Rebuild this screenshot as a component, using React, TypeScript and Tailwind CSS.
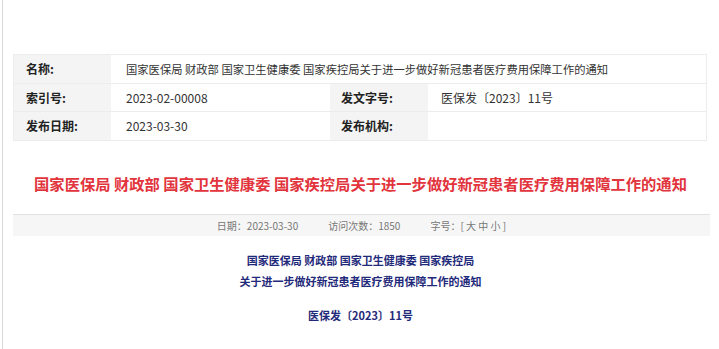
import React from "react";

const font = { fontFamily: '"Microsoft YaHei", "Noto Sans CJK SC", "Noto Sans", sans-serif' };

export default function App() {
  return (
    <div className="w-[719px] h-[349px] bg-white overflow-hidden" style={font}>
      <div className="ml-[2px] h-full border-l border-[#d9d9d9] pl-[10px] pr-[11px] pt-[54px]">
        <div className="w-[694px] border border-[#ececec] text-[12px] text-[#333]">
          <div className="flex h-[29px] border-b border-[#ececec]">
            <div className="w-[97px] bg-[#f4f4f4] pl-[12px] flex items-center font-bold text-[#222]">名称:</div>
            <div className="flex-1 pl-[15px] flex items-center text-[11.3px]">国家医保局 财政部 国家卫生健康委 国家疾控局关于进一步做好新冠患者医疗费用保障工作的通知</div>
          </div>
          <div className="flex h-[28px] border-b border-[#ececec]">
            <div className="w-[97px] bg-[#f4f4f4] pl-[12px] flex items-center font-bold text-[#222]">索引号:</div>
            <div className="w-[219px] pl-[15px] flex items-center">2023-02-00008</div>
            <div className="w-[98px] bg-[#f4f4f4] pl-[11px] flex items-center font-bold text-[#222]">发文字号:</div>
            <div className="flex-1 pl-[13px] flex items-center">医保发〔2023〕11号</div>
          </div>
          <div className="flex h-[28px]">
            <div className="w-[97px] bg-[#f4f4f4] pl-[12px] flex items-center font-bold text-[#222]">发布日期:</div>
            <div className="w-[219px] pl-[15px] flex items-center">2023-03-30</div>
            <div className="w-[98px] bg-[#f4f4f4] pl-[11px] flex items-center font-bold text-[#222]">发布机构:</div>
            <div className="flex-1"></div>
          </div>
        </div>

        <div className="mt-[30px] text-center text-[15.3px] font-bold text-[#e2343c] leading-[24px]">
          国家医保局 财政部 国家卫生健康委 国家疾控局关于进一步做好新冠患者医疗费用保障工作的通知
        </div>

        <div className="mt-[19px] w-[697px] h-[22px] bg-[#f6f6f6] border-t border-[#e2e2e2] flex items-center justify-center gap-[30px] text-[10px] text-[#777]">
          <span>日期：2023-03-30</span>
          <span>访问次数：1850</span>
          <span>字号：[ 大 中 小 ]</span>
        </div>

        <div className="mt-[14px] text-center text-[11px] font-bold text-[#1f2a7a] leading-[21px]">
          <div>国家医保局 财政部 国家卫生健康委 国家疾控局</div>
          <div>关于进一步做好新冠患者医疗费用保障工作的通知</div>
          <div className="mt-[13px]">医保发〔2023〕11号</div>
        </div>
      </div>
    </div>
  );
}
